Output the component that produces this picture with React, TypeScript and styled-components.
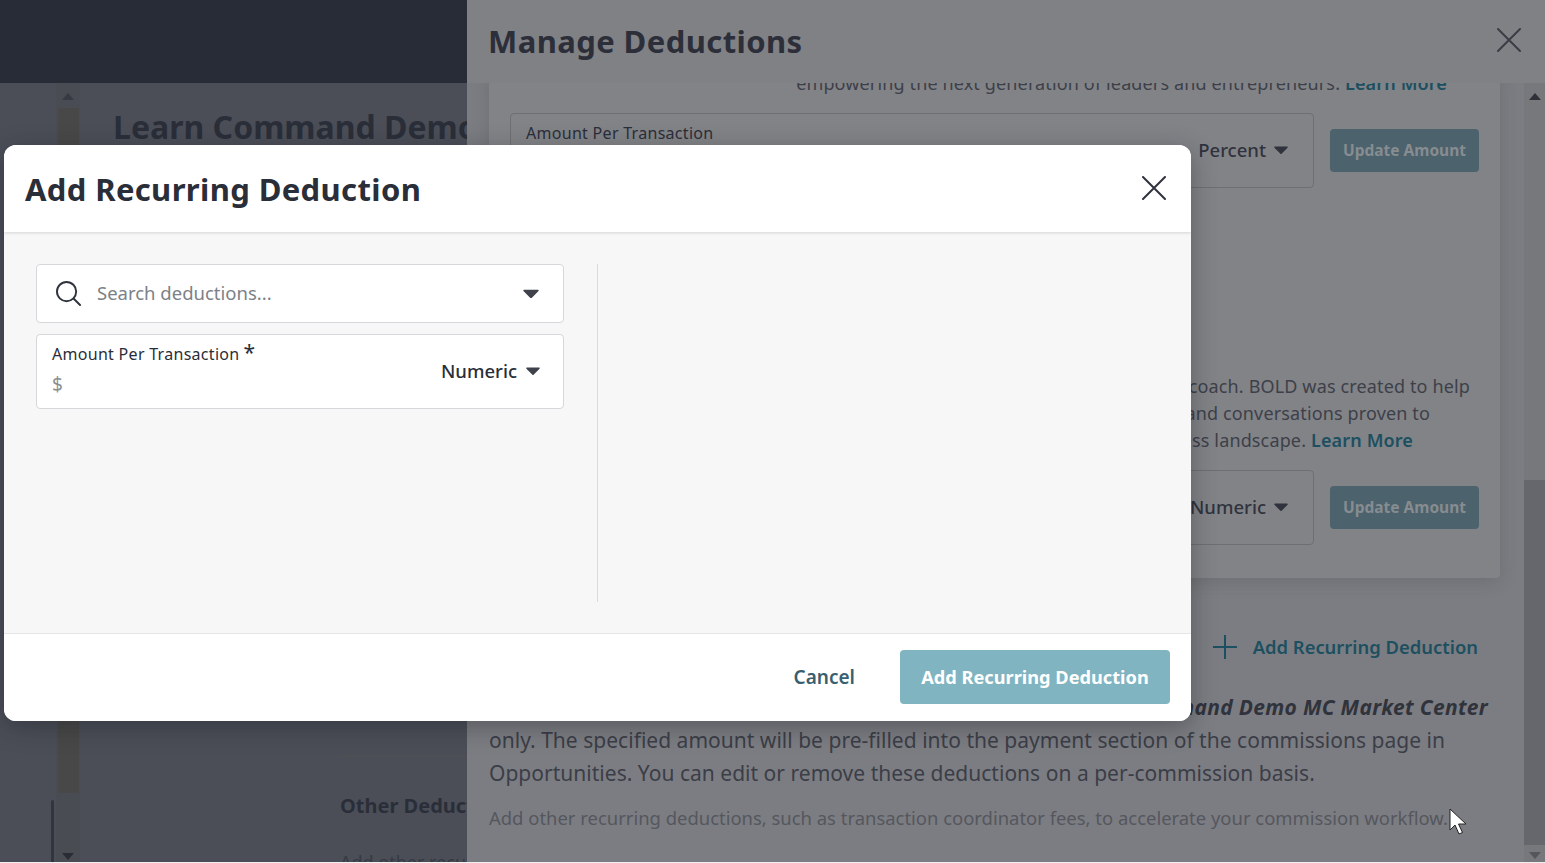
import styled, { createGlobalStyle } from 'styled-components';

const GlobalStyle = createGlobalStyle`
  html, body {
    margin: 0;
    padding: 0;
    height: 100%;
    overflow: hidden;
    background: #eef0f2;
    font-family: "Noto Sans", "Open Sans", sans-serif;
  }
  * {
    box-sizing: border-box;
  }
`;

const Page = styled.div`
  height: 862px;
  display: flex;
  flex-direction: column;
  overflow: hidden;
  position: relative;
  background: #4b4e57;
`;

const TopBar = styled.div`
  height: 83px;
  flex: none;
  background: #282c36;
`;

const AppBody = styled.div`
  flex: 1;
  display: flex;
  min-height: 0;
`;

const Rail = styled.div`
  width: 56px;
  flex: none;
  display: flex;
  justify-content: flex-end;
  align-items: flex-end;
  padding-right: 2px;
`;

const RailMarker = styled.div`
  width: 3px;
  height: 62px;
  background: #2f3640;
  border-radius: 2px 2px 0 0;
`;

const AppScrollbar = styled.div`
  width: 24px;
  flex: none;
  display: flex;
  flex-direction: column;
  align-items: center;
  padding: 10px 1px 2px;
  background: #4a4c54;
`;

const AppThumb = styled.div`
  width: 21px;
  height: 685px;
  margin: 8px 0 auto;
  background: #484848;
`;

const AppContent = styled.div`
  flex: 1;
  padding: 26px 0 0 33px;
  overflow: hidden;
`;

const AppTitle = styled.h1`
  margin: 0;
  font-size: 32px;
  line-height: 36px;
  font-weight: 700;
  color: #2a2e39;
  white-space: nowrap;
`;

const AppSection = styled.div`
  margin: 611px 0 0 227px;
  border-top: 1px solid #50504f;
  padding-top: 35px;
`;

const AppSectionTitle = styled.div`
  font-size: 20px;
  line-height: 28px;
  font-weight: 700;
  color: #2a2e39;
  white-space: nowrap;
`;

const AppSectionText = styled.div`
  margin-top: 30px;
  font-size: 18px;
  color: #363a44;
  white-space: nowrap;
`;

const Drawer = styled.div`
  position: absolute;
  top: 0;
  right: 0;
  bottom: 0;
  width: 1078px;
  display: flex;
  flex-direction: column;
  background: #7c7d82;
`;

const DrawerHeader = styled.div`
  height: 83px;
  flex: none;
  display: flex;
  align-items: center;
  justify-content: space-between;
  padding: 0 24px 3px 21px;
  background: #808185;
  position: relative;
  z-index: 1;
`;

const DrawerTitle = styled.h2`
  margin: 2px 0 0;
  font-size: 31px;
  font-weight: 700;
  letter-spacing: 0.42px;
  color: #2c2f39;
`;

const DrawerBody = styled.div`
  flex: 1;
  min-height: 0;
  display: flex;
`;

const DrawerScroll = styled.div`
  flex: 1;
  min-width: 0;
  overflow: hidden;
  padding: 0 24px 0 22px;
`;

const Card = styled.div`
  margin-top: -13px;
  padding: 0 21px 33px;
  background: #828387;
  border-radius: 0 0 4px 4px;
  box-shadow: 0 4px 18px rgba(50, 50, 55, 0.18);
`;

const CardLine = styled.div<{ $inset: number }>`
  height: 27px;
  padding-right: ${(p) => p.$inset}px;
  text-align: right;
  font-size: 18px;
  line-height: 27px;
  letter-spacing: 0.14px;
  color: #3d4049;
  white-space: nowrap;
`;

const LearnMore = styled.span`
  font-weight: 600;
  color: #1c5060;
`;

const FieldRow = styled.div`
  margin-top: 16px;
  display: flex;
  align-items: center;
  gap: 16px;
`;

const BackField = styled.div`
  flex: 1;
  height: 75px;
  padding: 8px 25px 8px 15px;
  display: flex;
  justify-content: space-between;
  align-items: flex-start;
  border: 1px solid #6e6f74;
  border-radius: 4px;
`;

const BackLabel = styled.div`
  font-size: 16px;
  line-height: 22px;
  letter-spacing: 0.29px;
  color: #2a2e39;
`;

const BackUnit = styled.div`
  align-self: center;
  display: flex;
  align-items: center;
  gap: 8px;
  font-size: 18.5px;
  font-weight: 500;
  color: #30333d;
`;

const UnitText = styled.span`
  margin-top: -2px;
`;

const UpdateButton = styled.div`
  width: 149px;
  height: 43px;
  padding-bottom: 1px;
  display: flex;
  align-items: center;
  justify-content: center;
  border-radius: 4px;
  background: #4c626d;
  color: #878c90;
  font-size: 15.5px;
  font-weight: 700;
`;

const CardGap = styled.div`
  height: 185px;
`;

const AddRow = styled.div`
  margin: 56px 22px 0 0;
  height: 24px;
  display: flex;
  align-items: center;
  justify-content: flex-end;
  gap: 16px;
  color: #1c5060;
  font-size: 18.4px;
  font-weight: 600;
`;

const PlusIcon = styled.svg`
  margin-top: 2px;
`;

const Note = styled.p`
  margin: 33px 0 0;
  font-size: 21px;
  line-height: 33px;
  letter-spacing: 0.02px;
  color: #3b3e47;
  white-space: nowrap;
`;

const NoteStrong = styled.div`
  text-align: right;
  margin-right: 12px;
  font-style: italic;
  font-weight: 700;
  letter-spacing: 0.3px;
  color: #30333c;
`;

const NoteSub = styled.p`
  margin: 14px 0 0;
  font-size: 18.44px;
  line-height: 27px;
  color: #55575e;
  white-space: nowrap;
`;

const DrawerScrollbar = styled.div`
  width: 21px;
  flex: none;
  display: flex;
  flex-direction: column;
  align-items: center;
  padding: 10px 0 3px;
  background: #77787c;
`;

const DrawerThumb = styled.div`
  width: 21px;
  height: 365px;
  margin: auto 0 7px;
  background: #66676c;
`;

const Cursor = styled.svg`
  position: absolute;
  left: 1449px;
  top: 808px;
`;

const Modal = styled.div`
  position: absolute;
  left: 4px;
  top: 145px;
  width: 1187px;
  height: 576px;
  display: flex;
  flex-direction: column;
  overflow: hidden;
  border-radius: 12px;
  background: #fff;
  box-shadow: 0 6px 24px rgba(20, 22, 28, 0.35);
`;

const ModalHeader = styled.div`
  height: 87px;
  flex: none;
  display: flex;
  align-items: center;
  justify-content: space-between;
  padding: 0 25px 2px 21px;
  background: #fff;
  box-shadow: 0 1px 3px rgba(0, 0, 0, 0.14);
  position: relative;
`;

const ModalTitle = styled.h2`
  margin: 2px 0 0;
  font-size: 31px;
  font-weight: 700;
  letter-spacing: 0.37px;
  color: #2a2e39;
`;

const ModalBody = styled.div`
  flex: 1;
  min-height: 0;
  display: flex;
  padding: 32px 0 31px;
  background: #f7f7f7;
`;

const FormColumn = styled.div`
  width: 594px;
  padding: 0 33px 0 32px;
  display: flex;
  flex-direction: column;
  gap: 11px;
  border-right: 1px solid #d9dbdd;
`;

const SearchBox = styled.div`
  height: 59px;
  display: flex;
  align-items: center;
  gap: 16px;
  padding: 0 24px 0 19px;
  background: #fff;
  border: 1px solid #d5d7da;
  border-radius: 4px;
`;

const Placeholder = styled.div`
  flex: 1;
  margin-top: -2px;
  font-size: 18.5px;
  color: #7c8187;
`;

const AmountBox = styled.div`
  height: 75px;
  display: flex;
  align-items: center;
  justify-content: space-between;
  padding: 0 23px 0 15px;
  background: #fff;
  border: 1px solid #d5d7da;
  border-radius: 4px;
`;

const AmountField = styled.div`
  display: flex;
  flex-direction: column;
  gap: 7px;
  padding-bottom: 5px;
`;

const AmountLabel = styled.div`
  display: flex;
  font-size: 16px;
  line-height: 22px;
  letter-spacing: 0.29px;
  color: #2a2e39;
`;

const Required = styled.span`
  margin-left: 4px;
  font-size: 21px;
  line-height: 18px;
`;

const DollarSign = styled.div`
  font-size: 19px;
  line-height: 24px;
  color: #8a8e93;
`;

const UnitPicker = styled.div`
  display: flex;
  align-items: center;
  gap: 9px;
  font-size: 18.5px;
  font-weight: 500;
  color: #2a2e39;
`;

const ModalFooter = styled.div`
  height: 88px;
  flex: none;
  display: flex;
  align-items: center;
  justify-content: flex-end;
  gap: 45px;
  padding: 0 21px 2px 0;
  background: #fff;
  border-top: 1px solid #e4e5e7;
`;

const CancelLink = styled.div`
  font-size: 19px;
  font-weight: 600;
  color: #38606f;
`;

const SubmitButton = styled.div`
  width: 270px;
  height: 54px;
  display: flex;
  align-items: center;
  justify-content: center;
  border-radius: 4px;
  background: #80b4c0;
  color: #fff;
  font-size: 18.2px;
  font-weight: 700;
`;

function CloseIcon({ color }: { color: string }) {
  return (
    <svg width="24" height="24" viewBox="0 0 24 24" fill="none" stroke={color} strokeWidth="2" strokeLinecap="round">
      <path d="M1 1l22 22M23 1L1 23" />
    </svg>
  );
}

function Caret({ color, size = 14 }: { color: string; size?: number }) {
  return (
    <svg width={size} height={size * 0.6} viewBox="0 0 14 8.4">
      <path d="M1 .6h12c.7 0 1 .7.6 1.2L7.6 7.8c-.3.4-.9.4-1.2 0L.4 1.8C0 1.3.3.6 1 .6z" fill={color} />
    </svg>
  );
}

function ScrollArrow({ up, color }: { up?: boolean; color: string }) {
  return (
    <svg width="12" height="7" viewBox="0 0 12 7">
      <path d={up ? 'M6 0l6 7H0z' : 'M6 7L0 0h12z'} fill={color} />
    </svg>
  );
}

export default function App() {
  return (
    <>
      <GlobalStyle />
      <Page>
        <TopBar />
        <AppBody>
          <Rail>
            <RailMarker />
          </Rail>
          <AppScrollbar>
            <ScrollArrow up color="#373a42" />
            <AppThumb />
            <ScrollArrow color="#292c35" />
          </AppScrollbar>
          <AppContent>
            <AppTitle>Learn Command Demo</AppTitle>
            <AppSection>
              <AppSectionTitle>Other Deductions</AppSectionTitle>
              <AppSectionText>Add other recurring</AppSectionText>
            </AppSection>
          </AppContent>
        </AppBody>

        <Drawer>
          <DrawerHeader>
            <DrawerTitle>Manage Deductions</DrawerTitle>
            <CloseIcon color="#3a3d46" />
          </DrawerHeader>
          <DrawerBody>
            <DrawerScroll>
              <Card>
                <CardLine $inset={32}>
                  empowering the next generation of leaders and entrepreneurs. <LearnMore>Learn More</LearnMore>
                </CardLine>
                <FieldRow>
                  <BackField>
                    <BackLabel>Amount Per Transaction</BackLabel>
                    <BackUnit>
                      <UnitText>Percent</UnitText> <Caret color="#30333d" />
                    </BackUnit>
                  </BackField>
                  <UpdateButton>Update Amount</UpdateButton>
                </FieldRow>
                <CardGap />
                <CardLine $inset={9}>coach. BOLD was created to help</CardLine>
                <CardLine $inset={49}>and conversations proven to</CardLine>
                <CardLine $inset={66}>
                  business landscape. <LearnMore>Learn More</LearnMore>
                </CardLine>
                <FieldRow>
                  <BackField>
                    <BackLabel>Amount Per Transaction</BackLabel>
                    <BackUnit>
                      <UnitText>Numeric</UnitText> <Caret color="#30333d" />
                    </BackUnit>
                  </BackField>
                  <UpdateButton>Update Amount</UpdateButton>
                </FieldRow>
              </Card>
              <AddRow>
                <PlusIcon width="24" height="24" viewBox="0 0 24 24" stroke="#1c5060" strokeWidth="2" fill="none">
                  <path d="M12 0v24M0 12h24" />
                </PlusIcon>
                Add Recurring Deduction
              </AddRow>
              <Note>
                <NoteStrong>Learn Command Demo MC Market Center</NoteStrong>
                only. The specified amount will be pre-filled into the payment section of the commissions page in
                <br />
                Opportunities. You can edit or remove these deductions on a per-commission basis.
              </Note>
              <NoteSub>
                Add other recurring deductions, such as transaction coordinator fees, to accelerate your commission
                workflow.
              </NoteSub>
            </DrawerScroll>
            <DrawerScrollbar>
              <ScrollArrow up color="#2f3139" />
              <DrawerThumb />
              <ScrollArrow color="#55565b" />
            </DrawerScrollbar>
          </DrawerBody>
        </Drawer>

        <Cursor width="19" height="28" viewBox="0 0 19 28">
          <path d="M1 1v21l5-5 4 9 3.500-1.500-4-8.500H17z" fill="#fff" stroke="#222" strokeWidth="1" />
        </Cursor>

        <Modal>
          <ModalHeader>
            <ModalTitle>Add Recurring Deduction</ModalTitle>
            <CloseIcon color="#2f333d" />
          </ModalHeader>
          <ModalBody>
            <FormColumn>
              <SearchBox>
                <svg width="25" height="25" viewBox="0 0 26 26" fill="none" stroke="#2f333d" strokeWidth="2" strokeLinecap="round">
                  <circle cx="11" cy="11" r="10" />
                  <path d="M18.500 18.500l6.500 6.500" />
                </svg>
                <Placeholder>Search deductions...</Placeholder>
                <Caret color="#3f424b" size={16} />
              </SearchBox>
              <AmountBox>
                <AmountField>
                  <AmountLabel>
                    Amount Per Transaction<Required>*</Required>
                  </AmountLabel>
                  <DollarSign>$</DollarSign>
                </AmountField>
                <UnitPicker>
                  <UnitText>Numeric</UnitText> <Caret color="#3f424b" />
                </UnitPicker>
              </AmountBox>
            </FormColumn>
          </ModalBody>
          <ModalFooter>
            <CancelLink>Cancel</CancelLink>
            <SubmitButton>Add Recurring Deduction</SubmitButton>
          </ModalFooter>
        </Modal>
      </Page>
    </>
  );
}
